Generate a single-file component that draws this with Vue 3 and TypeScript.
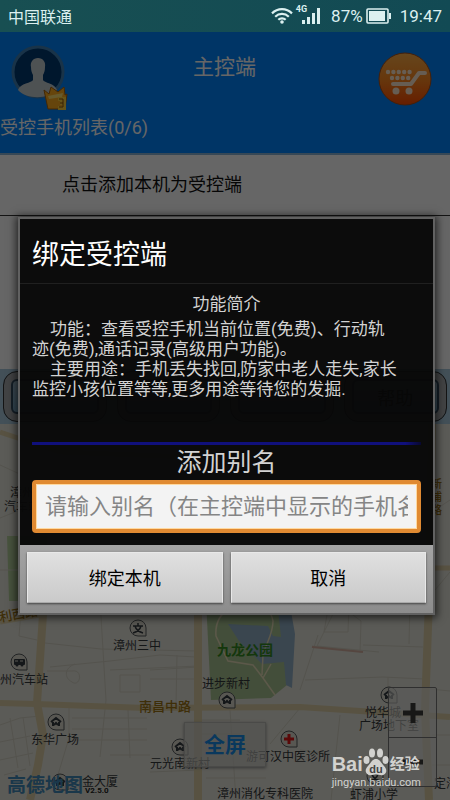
<script setup lang="ts">
import { ref } from 'vue'

interface Place {
  name: string
  x: number
  y: number
}

interface Pin {
  kind: 'home' | 'school' | 'bus' | 'hospital'
  x: number
  y: number
}

const alias = ref('')
const tabs: string[] = ['', '', '', '帮助']

const intro: string[] = [
  '功能：查看受控手机当前位置(免费)、行动轨\n迹(免费),通话记录(高级用户功能)。',
  '主要用途：手机丢失找回,防家中老人走失,家长\n监控小孩位置等等,更多用途等待您的发掘.',
]

const places: Place[] = [
  { name: '漳州', x: 10, y: 497 },
  { name: '汽车站', x: 4, y: 511 },
  { name: '漳州三中', x: 113, y: 650 },
  { name: '州汽车站', x: 0, y: 684 },
  { name: '东华广场', x: 31, y: 744 },
  { name: '金大厦', x: 82, y: 786 },
  { name: '进步新村', x: 202, y: 688 },
  { name: '元光南新村', x: 150, y: 768 },
  { name: '游可汉中医诊所', x: 246, y: 761 },
  { name: '漳州消化专科医院', x: 217, y: 798 },
  { name: '悦华城', x: 365, y: 717 },
  { name: '广场地下室', x: 359, y: 730 },
  { name: '虾浦小学', x: 350, y: 799 },
  { name: '定海', x: 434, y: 788 },
]

const pins: Pin[] = [
  { kind: 'school', x: 138, y: 628 },
  { kind: 'bus', x: 19, y: 662 },
  { kind: 'home', x: 56, y: 722 },
  { kind: 'home', x: 227, y: 700 },
  { kind: 'home', x: 180, y: 747 },
  { kind: 'home', x: 389, y: 695 },
  { kind: 'home', x: 60, y: 782 },
  { kind: 'school', x: 375, y: 776 },
  { kind: 'hospital', x: 289, y: 739 },
]
</script>

<template>
  <div class="screen">
    <div class="status">
      <span class="carrier">中国联通</span>
      <svg class="wifi" viewBox="0 0 22 16" aria-hidden="true">
        <g fill="none" stroke="currentColor" stroke-width="2.2">
          <path d="M1 5.4C6.6-.2 15.4-.2 21 5.4" />
          <path d="M4.2 8.7C8 5 14 5 17.8 8.7" />
          <path d="M7.3 11.7C9.3 9.8 12.7 9.8 14.7 11.7" />
        </g>
        <circle cx="11" cy="14" r="1.8" fill="currentColor" />
      </svg>
      <span class="network">4G</span>
      <svg class="signal" viewBox="0 0 18 16" aria-hidden="true">
        <path fill="currentColor" d="M0 12h3v4H0zM5 9h3v7H5zM10 5h3v11h-3zM15 0h3v16h-3z" />
      </svg>
      <span class="percent">87%</span>
      <svg class="battery" viewBox="0 0 25 16" aria-hidden="true">
        <rect x="1" y="1" width="21" height="14" rx="1" fill="none" stroke="currentColor" stroke-width="1.6" />
        <rect x="3" y="3" width="16" height="10" fill="currentColor" />
        <rect x="23" y="5" width="2" height="6" fill="currentColor" />
      </svg>
      <span class="clock">19:47</span>
    </div>

    <header class="header">
      <div class="headrow">
        <button class="round" type="button" aria-label="用户">
          <svg viewBox="0 0 58 68">
            <circle cx="27" cy="27" r="25" fill="#003a70" stroke="#3f7fb4" stroke-width="3" />
            <path fill="#c4ccd0" d="M27 13c5 0 8 4 7 9 0 4-1 6-2 8v5c1 3 12 3 14 10-8 9-30 10-39 0 2-7 14-7 15-10v-5c-1-2-2-4-2-8-1-5 2-9 7-9z" />
            <path fill="#ffad20" stroke="#a8620c" stroke-width="1" d="M33 45l5 4 2-7 7 5 6-5 1 8 2-1-2 15-17 0z" />
            <path fill="#ffe070" d="M37 51l15-3-1 4-13 2z" />
            <path fill="none" stroke="#ffd23c" stroke-width="4" d="M47 54h6v4h-4m4 0v5h-6" />
            <path fill="none" stroke="#8c5208" stroke-width="1" d="M48 54h4v4h-3m3 0v4h-4" />
          </svg>
        </button>
        <h1>主控端</h1>
        <button class="round cart" type="button" aria-label="购物车">
          <svg viewBox="0 0 54 54">
            <defs>
              <linearGradient id="cartFill" x1="0" y1="0" x2="0" y2="1">
                <stop offset="0" stop-color="#ffb048" />
                <stop offset="0.5" stop-color="#ff8a22" />
                <stop offset="1" stop-color="#ff4a00" />
              </linearGradient>
            </defs>
            <circle cx="27" cy="27" r="26" fill="url(#cartFill)" stroke="#a8501c" />
            <g fill="none" stroke="#ffe8d0" stroke-linecap="round" stroke-linejoin="round">
              <path stroke-width="4" d="M47 21h-6l-8 11H15" />
              <path stroke-width="4.4" stroke-dasharray="0 5.4" d="M10 20h23M14 26h17" />
            </g>
            <circle cx="18" cy="39" r="3.5" fill="#ffe8d0" />
            <circle cx="31" cy="39" r="3.5" fill="#ffe8d0" />
          </svg>
        </button>
      </div>
      <p class="count">受控手机列表(0/6)</p>
    </header>

    <button class="addrow" type="button">点击添加本机为受控端</button>
    <div class="list"></div>

    <nav class="tabs">
      <button v-for="(tab, i) in tabs" :key="i" class="tab" type="button">{{ tab }}</button>
    </nav>

    <section class="map">
      <svg class="canvas" viewBox="0 424 450 376" preserveAspectRatio="xMidYMid slice">
        <path fill="#b4cf9c" d="M7 536h40v65H9z" />
        <path fill="#a9c391" d="M206 600h80l5 40-4 45-16 13-60 2-2-40z" />
        <path fill="#91aec6" d="M228 624l40 2 5 10 8 1-4-37 12 0 6 34-3 54-6-3-2-23-22 2-23-23z" />
        <g fill="none" stroke="#e6ddb8" stroke-width="1.5">
          <path d="M230 608c-10 6-15 16-14 28l12 25 25 4 10 13 12 17M263 678l8-14M253 605c10 0 18 5 20 16 0 13-6 20-10 34l-1 20" />
        </g>
        <g fill="none" stroke="#d2d0c2" stroke-width="1">
          <path d="M0 465l35 16 70-20M0 518l25-10M0 570h20M45 643l56 6 97 2M22 600l-3 36 18 4M100 600l6 100-6 57M50 667l60-6 50-6 36 2M47 671h25c12-2 8 17 0 11-8-4-8-14 3-18M110 670l88-4M0 725l20-7 20-2M0 742l30-6M0 760l33-7M4 775l22-6M10 718l8 50M23 717l7 49M69 708v30l-12 40 18 0M72 718h75M72 729h75M72 740h75M110 755l40 0M128 710l2 48M150 670l48-3M150 679h48M177 655l-1 50" />
          <path d="M120 675h20v17h-20zM450 500l-15 10M435 590l15-18M340 600l-12 24-11 22 62 6M329 603h20l-1 29-24 0zM349 612l12 9-1 32M312 646l51 6M363 645l60 2M318 635l-18 55M305 680l78-3 42 2M388 677v30M410 600l-1 44M430 689l20 2M300 708l-30 36M230 710l6 90M340 715l-9 85M200 720h40M200 734h40M150 772l50-2M206 778h60M300 750l30 4M432 735h18M432 765h18" />
        </g>
        <g fill="none" stroke="#dbcea5" stroke-linejoin="round">
          <path stroke-width="8" d="M44 600l-7 103 6 32-5 30-8 35M198 600v200M432 424l-3 176-4 110 4 90" />
          <path stroke-width="6" d="M0 703l36 1 110 4 154-1 150 10" />
          <path stroke-width="5" d="M0 432l60 20 130 5M0 622l45-8M435 568h15" />
        </g>
        <path d="M312 647l51 5" stroke="#d4b0a0" stroke-width="2" />
        <g class="road">
          <text x="0" y="622" transform="rotate(-10 0 622)">利西路</text>
          <text x="139" y="711">南昌中路</text>
          <text x="431" y="488" font-size="11">新</text>
          <text x="431" y="501" font-size="11">浦</text>
          <text x="431" y="514" font-size="11">路</text>
        </g>
        <text class="park" x="217" y="655">九龙公园</text>
        <g class="places">
          <text v-for="p in places" :key="p.name + p.x" :x="p.x" :y="p.y">{{ p.name }}</text>
        </g>
        <g v-for="(pin, i) in pins" :key="i" :transform="`translate(${pin.x} ${pin.y})`">
          <path fill="#ddd9ce" stroke="#555a5c" d="M-8 0a8 8 0 0 1 16 0v8h-8a8 8 0 0 1-8-8z" />
          <path v-if="pin.kind === 'home'" fill="none" stroke="#333a40" stroke-width="2" d="M-5 0L0-4 5 0M-3 0v4M3 0v4M-2 3L0 1l2 2" />
          <path v-else-if="pin.kind === 'hospital'" fill="none" stroke="#e01818" stroke-width="3" d="M-5 0H5M0-5V5" />
          <g v-else-if="pin.kind === 'bus'">
            <rect x="-5" y="-3" width="11" height="6" rx="1" fill="#333a40" />
            <path stroke="#ddd9ce" stroke-width="1" d="M-4-1h3M1-1h3" />
            <circle cx="-2" cy="3" r="1.5" fill="#333a40" />
            <circle cx="3" cy="3" r="1.5" fill="#333a40" />
          </g>
          <path v-else fill="none" stroke="#333a40" stroke-width="1.5" d="M-5-2H5M0-5v3M-3-2C-2 2 2 4 5 5M3-2C2 2-2 4-5 5" />
        </g>
      </svg>
      <button class="full" type="button">全屏</button>
      <div class="zoombox">
        <button type="button" aria-label="放大">
          <svg viewBox="0 0 20 20"><path stroke="#3c3c3a" stroke-width="5" d="M0 10h20M10 0v20" /></svg>
        </button>
        <button type="button" aria-label="缩小">
          <svg viewBox="0 0 20 20"><path stroke="#3c3c3a" stroke-width="5" d="M0 10h20" /></svg>
        </button>
      </div>
      <div class="amap"><span>高德地图</span><small>V2.5.0</small></div>
    </section>

    <div class="overlay">
      <form class="dialog" role="dialog" aria-labelledby="dialogTitle" @submit.prevent>
        <h2 id="dialogTitle">绑定受控端</h2>
        <div class="content">
          <h3>功能简介</h3>
          <p v-for="text in intro" :key="text">{{ text }}</p>
          <hr />
          <label for="alias">添加别名</label>
          <input id="alias" v-model="alias" type="text" placeholder="请输入别名（在主控端中显示的手机名称）" />
        </div>
        <div class="actions">
          <button type="submit">绑定本机</button>
          <button type="button">取消</button>
        </div>
      </form>
    </div>

    <div class="watermark">
      <div class="brand">
        <span>Bai</span>
        <svg viewBox="0 0 26 28" aria-hidden="true">
          <g fill="currentColor">
            <ellipse cx="3.5" cy="12" rx="3" ry="4" />
            <ellipse cx="9" cy="5" rx="3" ry="4.5" />
            <ellipse cx="17" cy="5" rx="3" ry="4.5" />
            <ellipse cx="22.5" cy="12" rx="3" ry="4" />
            <path d="M13 11c4 0 5 4 8 7 5 5 1 10-4 9-3-.7-5-.7-8 0-5 1-9-4-4-9 3-3 4-7 8-7z" />
          </g>
          <text x="13" y="25" text-anchor="middle">du</text>
        </svg>
        <span class="cn">经验</span>
      </div>
      <div class="site">jingyan.baidu.com</div>
    </div>
  </div>
</template>

<style>
body {
  margin: 0;
  background: #5c5b56;
}
</style>

<style scoped>
.screen {
  position: relative;
  display: flex;
  flex-direction: column;
  min-height: 100vh;
  overflow: hidden;
  font-family: Roboto, "Noto Sans CJK SC", sans-serif;
}
.screen * {
  box-sizing: border-box;
}
h1, h2, h3, p {
  margin: 0;
  font-weight: 400;
}
button {
  font-family: inherit;
  margin: 0;
  padding: 0;
  border: 0;
  background: none;
  color: inherit;
}
svg {
  display: block;
}
.status {
  display: flex;
  align-items: center;
  height: 32px;
  padding: 0 8px;
  color: #dcf0f0;
  background: linear-gradient(90deg, #184f52, #124a54);
  font-size: 17px;
}
.carrier {
  margin-right: auto;
  font-size: 16px;
}
.wifi {
  width: 22px;
  height: 16px;
}
.network {
  align-self: flex-start;
  margin-left: 3px;
  padding-top: 4px;
  font-size: 9px;
  line-height: 10px;
  font-weight: 700;
}
.signal {
  width: 18px;
  height: 16px;
  margin-left: -5px;
  margin-right: 11px;
}
.battery {
  width: 25px;
  height: 16px;
  margin: 0 9px 0 3px;
}
.header {
  padding: 13px 0 13px;
  background: #0084fe;
  color: #fff;
}
.headrow {
  display: grid;
  grid-template-columns: 54px 1fr 54px;
  height: 54px;
  padding: 0 18px 0 11px;
}
.round svg {
  width: 58px;
  height: 68px;
}
.round.cart svg {
  width: 54px;
  height: 54px;
}
.headrow h1 {
  text-align: center;
  padding-left: 6px;
  font-size: 21px;
  line-height: 44px;
}
.count {
  margin-top: 17px;
  font-size: 18px;
  line-height: 24px;
}
.addrow {
  height: 63px;
  padding: 0 62px 5px;
  border-top: 2px solid #8ab4d8;
  border-bottom: 1px solid #333;
  background: #fff;
  color: #111;
  font-size: 18px;
  text-align: left;
}
.list {
  height: 153px;
  background: #fff;
}
.tabs {
  display: grid;
  grid-template-columns: repeat(4, 1fr);
  gap: 10px;
  height: 55px;
  padding: 2px 3px;
  background: #a8c8dd;
}
.tab {
  border: 1px solid #333;
  border-radius: 14px;
  background: linear-gradient(#a8c0d0, #73aace);
  box-shadow: inset 0 0 0 7px #a5a9ab, inset 0 0 0 9px #344c62;
  font-size: 18px;
  color: #000;
}
.map {
  position: relative;
  flex: 1;
  min-height: 376px;
  background: #e4e3d9;
}
.canvas {
  position: absolute;
  inset: 0;
  width: 100%;
  height: 100%;
}
.places {
  fill: #34383a;
  font-size: 12px;
}
.road {
  fill: #9c7316;
  font-size: 13px;
  font-weight: 500;
}
.park {
  fill: #348b22;
  font-size: 14px;
  font-weight: 700;
}
.full {
  position: absolute;
  left: 184px;
  bottom: 33px;
  width: 82px;
  height: 45px;
  padding-bottom: 4px;
  border: 1px solid #bab9b5;
  background: rgba(205, 205, 200, 0.7);
  box-shadow: 0 1px 3px #888;
  color: #188de8;
  font-size: 21px;
  font-weight: 700;
}
.zoombox {
  position: absolute;
  right: 13px;
  bottom: 13px;
  display: grid;
  grid-template-rows: 49px 49px;
  width: 49px;
  border: 1px solid #777;
  border-radius: 2px;
  background: rgba(225, 225, 220, 0.65);
}
.zoombox button {
  display: grid;
  place-items: center;
}
.zoombox button + button {
  border-top: 1px solid #777;
}
.zoombox svg {
  width: 20px;
  height: 20px;
}
.amap {
  position: absolute;
  left: 7px;
  bottom: 3px;
  display: flex;
  align-items: flex-end;
  color: #4289b8;
  font-size: 19px;
  line-height: 22px;
  font-weight: 700;
}
.amap small {
  margin-left: 2px;
  color: #222;
  font-size: 8px;
  line-height: 12px;
}
.overlay {
  position: absolute;
  inset: 32px 0 0;
  display: flex;
  align-items: center;
  padding: 0 15px 0 18px;
  background: rgba(0, 0, 0, 0.6);
}
.dialog {
  width: 100%;
  border: 2px solid #616161;
  background: rgba(7, 7, 7, 0.95);
  box-shadow: 0 1px 8px 2px rgba(0, 0, 0, 0.65);
  color: #d2d2d2;
}
.dialog h2 {
  height: 65px;
  padding: 0 12px;
  border-bottom: 1px solid #202020;
  color: #fff;
  font-size: 27px;
  line-height: 72px;
}
.content {
  padding: 10px 12px 12px;
}
.content h3 {
  margin-bottom: 5px;
  font-size: 17px;
  line-height: 20px;
  text-align: center;
}
.content p {
  font-size: 17px;
  line-height: 20px;
  text-indent: 18px;
  white-space: pre;
}
.content hr {
  height: 3px;
  margin: 43px 0 0;
  border: 0;
  background: linear-gradient(90deg, #10107c, #10107c 96%, #080830);
}
.content label {
  display: block;
  font-size: 25px;
  line-height: 35px;
  text-align: center;
}
.content input {
  display: block;
  width: 100%;
  height: 53px;
  padding: 0 9px;
  border: 4px solid #e08a32;
  border-radius: 4px;
  outline: 0;
  background: #f3f3f3;
  box-shadow: inset 0 0 0 1px #ffd9a0;
  font-family: inherit;
  font-size: 22px;
}
.content input::placeholder {
  color: #858585;
  opacity: 1;
}
.actions {
  display: grid;
  grid-template-columns: 1fr 1fr;
  gap: 8px;
  padding: 7px 7px 10px;
  background: linear-gradient(#a4a4a4, #8c8c8c);
}
.actions button {
  height: 51px;
  padding-bottom: 2px;
  border: 1px solid #e8e8e8;
  border-bottom-color: #aaa;
  background: linear-gradient(#e0e0e0, #cacaca);
  box-shadow: 0 1px 2px #444;
  color: #000;
  font-size: 18px;
}
.watermark {
  position: absolute;
  right: 29px;
  bottom: 10px;
  color: #d2d2cf;
}
.brand {
  display: flex;
  align-items: flex-end;
  height: 28px;
  font-family: "Liberation Sans", "Noto Sans CJK SC", sans-serif;
  font-size: 20px;
  line-height: 24px;
  font-weight: 700;
}
.brand svg {
  width: 26px;
  height: 28px;
}
.brand text {
  fill: #444;
  font-size: 11px;
}
.brand .cn {
  margin-left: 1px;
  font-size: 15px;
}
.site {
  font-size: 11px;
  line-height: 14px;
}
</style>
